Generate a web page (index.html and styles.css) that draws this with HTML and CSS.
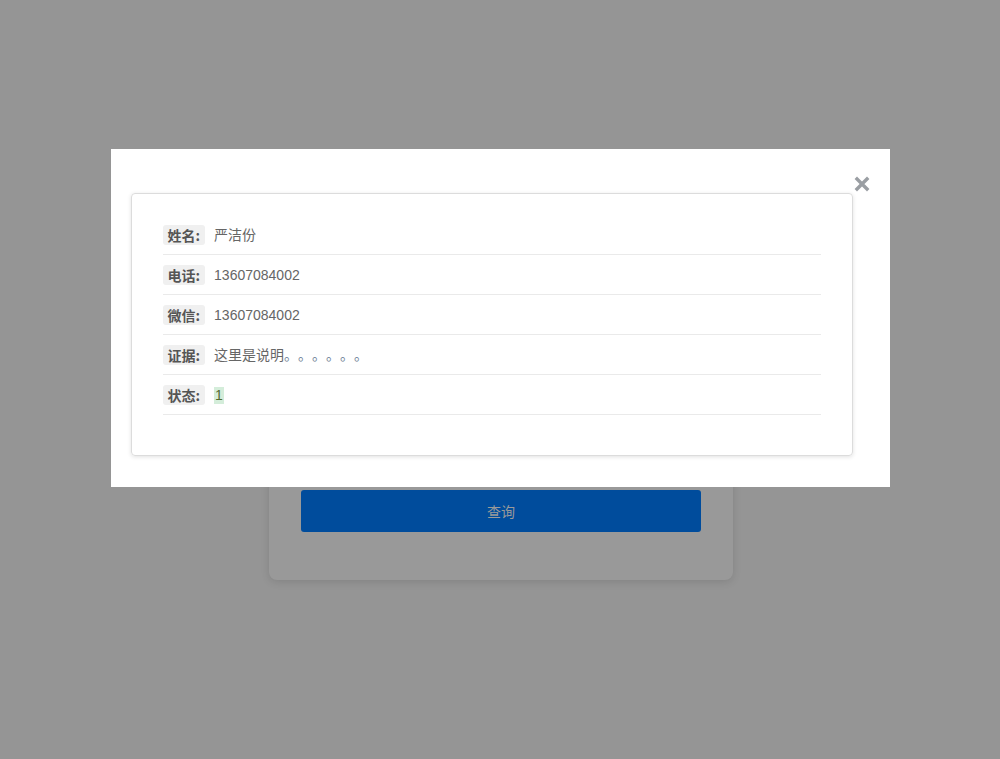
FILE: index.html
```html
<!DOCTYPE html>
<html lang="zh">
<head>
<meta charset="utf-8">
<link rel="stylesheet" href="styles.css">
</head>
<body>
<main class="page">
  <section class="query-card">
    <div class="query-body"></div>
    <button class="query-btn" type="button">查询</button>
  </section>
</main>
<div class="overlay">
  <div class="modal">
    <button class="close" type="button" aria-label="close">
      <svg width="16" height="16" viewBox="0 0 16 16"><path d="M3 3 L13 13 M13 3 L3 13" stroke="#9a9ea3" stroke-width="3.4" stroke-linecap="square"/></svg>
    </button>
    <div class="panel">
      <div class="row"><span class="label">姓名:</span><span class="value">严洁份</span></div>
      <div class="row"><span class="label">电话:</span><span class="value">13607084002</span></div>
      <div class="row"><span class="label">微信:</span><span class="value">13607084002</span></div>
      <div class="row"><span class="label">证据:</span><span class="value">这里是说明<span class="dots">。。。。。。</span></span></div>
      <div class="row"><span class="label">状态:</span><span class="value"><span class="status">1</span></span></div>
    </div>
  </div>
</div>
</body>
</html>
```
FILE: styles.css
```css
* { box-sizing: border-box; }
html, body { margin: 0; padding: 0; }
body {
  width: 1000px;
  height: 759px;
  background: #959595;
  font-family: "Liberation Sans", "Noto Sans CJK SC", Arial, sans-serif;
  font-size: 14px;
  overflow: hidden;
  position: relative;
}
.page {
  display: flex;
  justify-content: center;
  padding-top: 200px;
  padding-left: 2px;
}
.query-card {
  width: 464px;
  background: #999999;
  border-radius: 8px;
  box-shadow: 0 2px 8px rgba(0,0,0,0.12);
  padding: 0 32px 48px;
}
.query-body { height: 290px; }
.query-btn {
  display: block;
  width: 400px;
  height: 42px;
  border: none;
  border-radius: 3px;
  background: #004c9c;
  color: #9a9a9a;
  font-family: "Noto Sans CJK SC", sans-serif;
  font-size: 14px;
  padding: 0;
}
.overlay {
  position: absolute;
  left: 0; top: 0;
  width: 1000px;
  height: 759px;
  padding-top: 149px;
  display: flex;
  justify-content: center;
  align-items: flex-start;
}
.modal {
  position: relative;
  width: 779px;
  height: 338px;
  background: #ffffff;
  padding: 44px 37px 0 20px;
}
.close {
  position: absolute;
  right: 20px;
  top: 27px;
  width: 16px;
  height: 16px;
  border: none;
  background: none;
  padding: 0;
  display: flex;
}
.panel {
  border: 1px solid #dcdcdc;
  border-radius: 4px;
  box-shadow: 0 1px 4px rgba(0,0,0,0.12);
  padding: 21px 31px 40px 31px;
  height: 263px;
}
.row {
  height: 40px;
  border-bottom: 1px solid #eaeaea;
  display: flex;
  align-items: center;
}
.label {
  display: inline-flex;
  align-items: center;
  height: 20px;
  padding: 0 5px;
  background: #f0f0f0;
  border-radius: 3px;
  color: #555;
  font-weight: bold;
  font-family: "Noto Sans CJK SC", sans-serif;
  font-size: 14px;
  line-height: 20px;
}
.value {
  margin-left: 9px;
  color: #666;
  font-size: 14px;
  font-family: "Liberation Sans", "Noto Sans CJK SC", sans-serif;
  line-height: 20px;
  text-spacing-trim: space-all;
}
.dots {
  color: #6d7f96;
  font-family: "Noto Sans CJK SC", sans-serif;
  font-feature-settings: "chws" 0, "halt" 0;
  text-spacing-trim: space-all;
}
.status {
  display: inline-block;
  background: #d4edda;
  color: #556b2f;
  padding: 0 1px;
  line-height: 17px;
}
```
